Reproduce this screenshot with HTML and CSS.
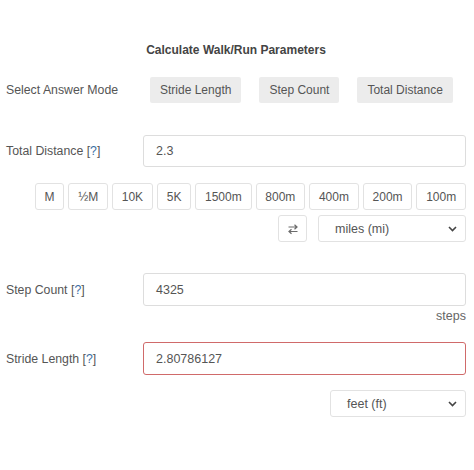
FILE: index.html
```html
<!DOCTYPE html>
<html>
<head>
<meta charset="utf-8">
<link rel="stylesheet" href="styles.css">
</head>
<body>
<div class="calc">
  <h1 class="title">Calculate Walk/Run Parameters</h1>

  <div class="mode-row">
    <span class="label">Select Answer Mode</span>
    <div class="modes">
      <button class="mode-btn">Stride Length</button>
      <button class="mode-btn">Step Count</button>
      <button class="mode-btn">Total Distance</button>
    </div>
  </div>

  <div class="field-row field-distance">
    <span class="label">Total Distance <span class="help">[<a class="q">?</a>]</span></span>
    <div class="input">2.3</div>
  </div>

  <div class="presets">
    <button class="preset">M</button>
    <button class="preset">½M</button>
    <button class="preset">10K</button>
    <button class="preset">5K</button>
    <button class="preset">1500m</button>
    <button class="preset">800m</button>
    <button class="preset">400m</button>
    <button class="preset">200m</button>
    <button class="preset">100m</button>
  </div>

  <div class="unit-row">
    <button class="swap">
      <svg width="12" height="12" viewBox="0 0 12 12" fill="none" stroke="#6b6b6b" stroke-width="1.2">
        <path d="M1.5 4H10M7.5 1.8L10 4L7.5 6.2"/>
        <path d="M10.5 8.5H2M4.5 6.3L2 8.5L4.5 10.7"/>
      </svg>
    </button>
    <div class="select select-miles">
      <span>miles (mi)</span>
      <svg class="chev" width="9" height="6" viewBox="0 0 9 6" fill="none" stroke="#444" stroke-width="1.6"><path d="M1 1L4.5 4.5L8 1"/></svg>
    </div>
  </div>

  <div class="field-row field-steps">
    <span class="label">Step Count <span class="help">[<a class="q">?</a>]</span></span>
    <div class="input">4325</div>
  </div>
  <div class="suffix">steps</div>

  <div class="field-row field-stride">
    <span class="label">Stride Length <span class="help">[<a class="q">?</a>]</span></span>
    <div class="input input-error">2.80786127</div>
  </div>

  <div class="unit-row unit-feet">
    <div class="select select-feet">
      <span>feet (ft)</span>
      <svg class="chev" width="9" height="6" viewBox="0 0 9 6" fill="none" stroke="#444" stroke-width="1.6"><path d="M1 1L4.5 4.5L8 1"/></svg>
    </div>
  </div>
</div>
</body>
</html>
```

FILE: styles.css
```css
* { box-sizing: border-box; }
html, body { margin: 0; padding: 0; background: #fff; }
body {
  font-family: "Liberation Sans", Arial, sans-serif;
  font-size: 12.3px;
  color: #555;
}
.calc {
  width: 474px;
  padding: 43px 8px 0 6px;
}
.title {
  margin: 0;
  font-size: 12px;
  font-weight: bold;
  color: #444;
  text-align: center;
  line-height: 15px;
  height: 15px;
}
.label {
  font-size: 12.3px;
  color: #555;
  white-space: nowrap;
}
.help { color: #555; }
.q { color: #3a6ea5; }

.mode-row {
  display: flex;
  align-items: center;
  margin-top: 19px;
  height: 26px;
}
.mode-row .label { width: 144px; }
.modes { display: flex; gap: 18px; }
.mode-btn {
  font: inherit;
  font-size: 12px;
  color: #555;
  background: #ececec;
  border: none;
  border-radius: 2px;
  height: 26px;
  padding: 0 10px;
}

.field-row {
  display: flex;
  align-items: center;
}
.field-row .label { width: 137px; }
.input {
  flex: 1;
  height: 32px;
  border: 1px solid #ddd;
  border-radius: 3px;
  padding: 0 12px;
  display: flex;
  align-items: center;
  font-size: 12.5px;
  color: #555;
}
.input-error { border-color: #d06a6a; }
.field-distance { margin-top: 32px; }

.presets {
  display: flex;
  justify-content: flex-end;
  gap: 4px;
  margin-top: 16px;
}
.preset {
  font: inherit;
  font-size: 12px;
  color: #555;
  background: #fff;
  border: 1px solid #e2e2e2;
  border-radius: 3px;
  height: 27px;
  padding: 0 8.8px;
}

.unit-row {
  display: flex;
  justify-content: flex-end;
  align-items: center;
  gap: 11px;
  margin-top: 5px;
}
.swap {
  width: 29px;
  height: 27px;
  background: #fff;
  border: 1px solid #e2e2e2;
  border-radius: 3px;
  padding: 0;
  display: flex;
  align-items: center;
  justify-content: center;
}
.select {
  height: 27px;
  border: 1px solid #e2e2e2;
  border-radius: 3px;
  padding: 0 8px 0 16px;
  display: flex;
  align-items: center;
  justify-content: space-between;
  font-size: 12.5px;
  color: #555;
  background: #fff;
}
.select-miles { width: 148px; }
.select-feet { width: 136px; }

.field-steps { margin-top: 31px; }
.field-steps .input { height: 33px; }
.suffix {
  text-align: right;
  line-height: 16px;
  margin-top: 2px;
  font-size: 12.5px;
  color: #666;
}
.field-stride { margin-top: 18px; }
.field-stride .input { height: 33px; }
.unit-feet { margin-top: 15px; }
```
